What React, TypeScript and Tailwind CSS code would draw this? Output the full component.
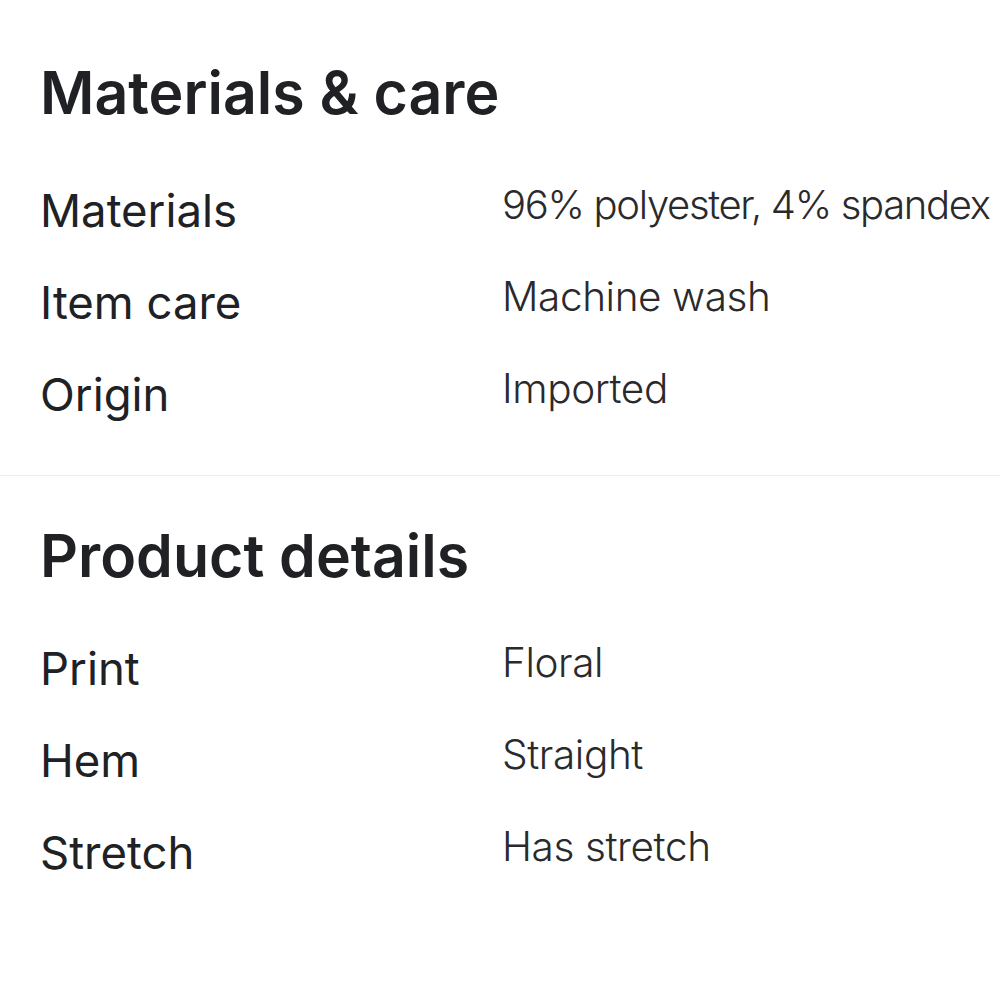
const materials = [
  { label: "Materials", value: "96% polyester, 4% spandex", tight: true },
  { label: "Item care", value: "Machine wash" },
  { label: "Origin", value: "Imported" },
];

const details = [
  { label: "Print", value: "Floral" },
  { label: "Hem", value: "Straight" },
  { label: "Stretch", value: "Has stretch" },
];

type Row = { label: string; value: string; tight?: boolean };

function SpecRows({ rows }: { rows: Row[] }) {
  return (
    <div className="flex flex-col">
      {rows.map((row) => (
        <div key={row.label} className="grid h-[92px] grid-cols-[462px_1fr] items-start">
          <div className="text-[45.5px] leading-[92px] font-normal text-[#202124]">{row.label}</div>
          <div
            className={
              row.tight
                ? "whitespace-nowrap text-[40px] leading-[80px] font-light tracking-[-0.033em] text-[#2a2a2d]"
                : "whitespace-nowrap text-[40.5px] leading-[80px] font-light tracking-[-0.01em] text-[#2a2a2d]"
            }
          >
            {row.value}
          </div>
        </div>
      ))}
    </div>
  );
}

export default function App() {
  return (
    <div className="min-h-[1000px] w-[1000px] overflow-hidden bg-white font-['Inter','Liberation_Sans',sans-serif]">
      <section className="px-10 pt-[63px] pb-[34px]">
        <h2 className="text-[59px] leading-[60px] font-semibold text-[#202124]">Materials &amp; care</h2>
        <div className="mt-[42px]">
          <SpecRows rows={materials} />
        </div>
      </section>
      <div className="h-px w-full bg-[#ececec]" />
      <section className="px-10 pt-[50px]">
        <h2 className="text-[59px] leading-[60px] font-semibold text-[#202124]">Product details</h2>
        <div className="mt-[37px]">
          <SpecRows rows={details} />
        </div>
      </section>
    </div>
  );
}
